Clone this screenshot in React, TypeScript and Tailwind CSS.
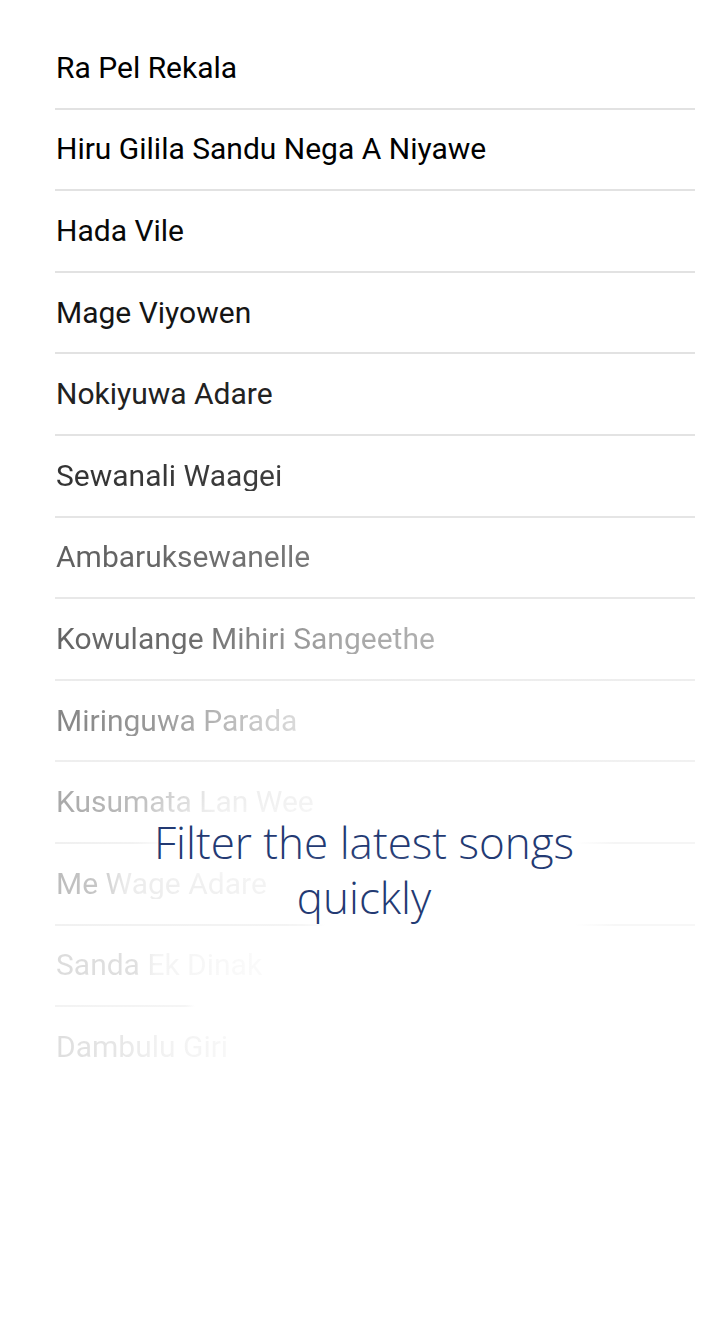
import React from 'react';

type Song = {
  title: string;
  text: string;
  line: string;
};

// each row fades a bit more than the one above it
const songs: Song[] = [
  { title: 'Ra Pel Rekala', text: 'text-black', line: 'bg-[#e2e2e2]' },
  { title: 'Hiru Gilila Sandu Nega A Niyawe', text: 'text-black', line: 'bg-[#e2e2e2]' },
  { title: 'Hada Vile', text: 'text-[#080808]', line: 'bg-[#e2e2e2]' },
  { title: 'Mage Viyowen', text: 'text-[#151515]', line: 'bg-[#e2e2e2]' },
  { title: 'Nokiyuwa Adare', text: 'text-[#222222]', line: 'bg-[#e3e3e3]' },
  {
    title: 'Sewanali Waagei',
    text: 'bg-[linear-gradient(90deg,#333_0px,#3e3e3e_240px)] bg-clip-text text-transparent',
    line: 'bg-[#e5e5e5]',
  },
  {
    title: 'Ambaruksewanelle',
    text: 'bg-[linear-gradient(90deg,#5e5e5e_0px,#787878_260px)] bg-clip-text text-transparent',
    line: 'bg-[#e8e8e8]',
  },
  {
    title: 'Kowulange Mihiri Sangeethe',
    text: 'bg-[linear-gradient(90deg,#646464_0px,#6c6c6c_130px,#a6a6a6_280px,#b0b0b0_380px)] bg-clip-text text-transparent',
    line: 'bg-[linear-gradient(90deg,#ebebeb_0px,#eeeeee_640px)]',
  },
  {
    title: 'Miringuwa Parada',
    text: 'bg-[linear-gradient(90deg,#858585_0px,#999_100px,#dadada_240px)] bg-clip-text text-transparent',
    line: 'bg-[linear-gradient(90deg,#eeeeee_0px,#f1f1f1_640px)]',
  },
  {
    title: 'Kusumata Lan Wee',
    text: 'bg-[linear-gradient(90deg,#a8a8a8_0px,#bdbdbd_80px,#ededed_160px,#f3f3f3_260px)] bg-clip-text text-transparent',
    line: 'bg-[linear-gradient(90deg,#f0f0f0_0px,#f3f3f3_100px,#ffffff_140px,#ffffff_520px,#f5f5f5_560px)]',
  },
  {
    title: 'Me Wage Adare',
    text: 'bg-[linear-gradient(90deg,#bcbcbc_0px,#c8c8c8_45px,#ececec_70px,#f3f3f3_200px)] bg-clip-text text-transparent',
    line: 'bg-[linear-gradient(90deg,#f1f1f1_0px,#f4f4f4_250px,#ffffff_270px,#ffffff_520px,#f7f7f7_560px)]',
  },
  {
    title: 'Sanda Ek Dinak',
    text: 'bg-[linear-gradient(90deg,#dcdcdc_0px,#e0e0e0_80px,#f4f4f4_100px,#fafafa_200px)] bg-clip-text text-transparent',
    line: 'bg-[linear-gradient(90deg,#f3f3f3_0px,#f5f5f5_130px,#ffffff_140px)]',
  },
  {
    title: 'Dambulu Giri',
    text: 'bg-[linear-gradient(90deg,#dedede_0px,#e6e6e6_60px,#f1f1f1_100px,#f8f8f8_180px)] bg-clip-text text-transparent',
    line: 'bg-white',
  },
];

const SongRow = ({ song }: { song: Song }) => (
  <div className="flex flex-col h-[81.6px]">
    <div className="flex-1 flex items-center pl-px">
      <span className={`text-[30px] leading-none ${song.text}`}>{song.title}</span>
    </div>
    <div className={`h-[2px] ${song.line}`} />
  </div>
);

const GlowLine = ({ children }: { children: React.ReactNode }) => (
  <span className="relative inline-block">
    <span className="absolute -inset-x-1 inset-y-1 rounded-2xl bg-white/95 blur-md" />
    <span className="relative">{children}</span>
  </span>
);

const App: React.FC = () => {
  return (
    <div
      className="relative min-h-[1343px] w-full bg-white overflow-hidden"
      style={{ fontFamily: 'Roboto, "Liberation Sans", sans-serif' }}
    >
      {/* Song list */}
      <div className="pt-[28px] pl-[55px] pr-[24px]">
        {songs.map((song) => (
          <SongRow key={song.title} song={song} />
        ))}
      </div>

      {/* Caption */}
      <div className="absolute top-[815px] left-0 right-0 flex justify-center pl-[9px]">
        <p
          className="flex flex-col items-center text-center text-[44px] leading-[55px] font-light text-[#233a73]"
          style={{ fontFamily: '"Open Sans", "Noto Sans", sans-serif' }}
        >
          <GlowLine>Filter the latest songs</GlowLine>
          <GlowLine>quickly</GlowLine>
        </p>
      </div>
    </div>
  );
};

export default App;
